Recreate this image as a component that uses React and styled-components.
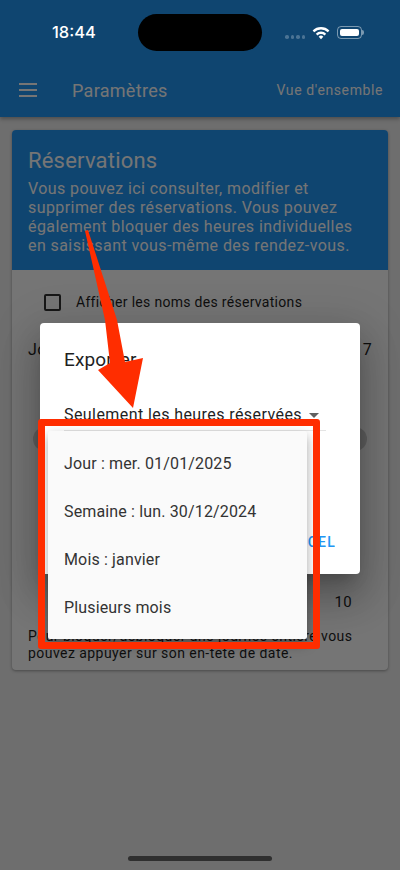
import React from "react";
import styled, { createGlobalStyle } from "styled-components";

const menuItems = ["Jour : mer. 01/01/2025", "Semaine : lun. 30/12/2024", "Mois : janvier", "Plusieurs mois"];

function App() {
  return (
    <>
      <GlobalStyle />
      <Page>
        <Header>
          <Toolbar>
            <MenuIcon>
              <span />
              <span />
              <span />
            </MenuIcon>
            <PageTitle>Paramètres</PageTitle>
            <OverviewLink>Vue d'ensemble</OverviewLink>
          </Toolbar>
        </Header>

        <Content>
          <Card>
            <CardHeader>
              <CardTitle>Réservations</CardTitle>
              <CardText>
                Vous pouvez ici consulter, modifier et supprimer des réservations. Vous pouvez également bloquer des
                heures individuelles en saisissant vous-même des rendez-vous.
              </CardText>
            </CardHeader>
            <CardBody>
              <CheckRow>
                <CheckBox />
                <span>Afficher les noms des réservations</span>
              </CheckRow>
              <ValueRow>
                <span>Jours</span>
                <span>7</span>
              </ValueRow>
              <SliderPill />
              <CountRow>10</CountRow>
              <HintText>
                Pour bloquer/débloquer une journée entière vous pouvez appuyer sur son en-tête de date.
              </HintText>
            </CardBody>
          </Card>
        </Content>

        <Scrim />

        <Dialog>
          <DialogTitle>Exporter</DialogTitle>
          <SelectRow>
            <span>Seulement les heures réservées</span>
            <SelectArrow />
          </SelectRow>
          <DialogActions>
            <ExcelButton>EXCEL</ExcelButton>
          </DialogActions>
        </Dialog>

        <DropdownMenu>
          {menuItems.map((item) => (
            <MenuItem key={item}>{item}</MenuItem>
          ))}
        </DropdownMenu>

        <RedFrame />
        <Arrow viewBox="0 0 400 870">
          <path d="M85 231 L88 230 L117 320 L125 362 L143 358 L133 408 L98 370 L110 363 L105 320 Z" fill="#ff2d00" />
        </Arrow>

        <StatusBar>
          <Clock>18:44</Clock>
          <Island />
          <StatusIcons>
            <SignalDots>
              <i />
              <i />
              <i />
              <i />
            </SignalDots>
            <svg width="18" height="14" viewBox="0 0 18 14">
              <path d="M.6 4.4a12 12 0 0 1 16.8 0l-1.6 1.8a9.6 9.6 0 0 0-13.6 0Z" fill="#fff" />
              <path d="M3.8 7.7a7.4 7.4 0 0 1 10.4 0l-1.7 1.8a4.9 4.9 0 0 0-7 0Z" fill="#fff" />
              <path d="M6.7 10.7a3.2 3.2 0 0 1 4.6 0L9 13.2Z" fill="#fff" />
            </svg>
            <Battery>
              <BatteryLevel />
            </Battery>
          </StatusIcons>
        </StatusBar>

        <HomeBar />
      </Page>
    </>
  );
}

export default App;

const GlobalStyle = createGlobalStyle`
  html, body {
    margin: 0;
    padding: 0;
    background: #efefef;
  }
  * {
    box-sizing: border-box;
  }
`;

const Page = styled.div`
  position: relative;
  width: 400px;
  height: 870px;
  overflow: hidden;
  background: #efefef;
  font-family: Roboto, "Liberation Sans", sans-serif;
  color: #1f1f1f;
`;

const Header = styled.header`
  height: 117px;
  padding-top: 60px;
  background: #2196f3;
  box-shadow: 0 2px 4px rgba(0, 0, 0, 0.3);
`;

const Toolbar = styled.div`
  display: flex;
  align-items: center;
  height: 60px;
  padding: 0 17px 0 19px;
  color: #fff;
`;

const MenuIcon = styled.div`
  display: flex;
  flex-direction: column;
  justify-content: space-between;
  width: 18px;
  height: 14px;
  margin-right: 35px;

  span {
    display: block;
    height: 2px;
    background: #fff;
  }
`;

const PageTitle = styled.div`
  flex: 1;
  font-size: 18px;
  font-weight: 400;
  letter-spacing: 0.3px;
`;

const OverviewLink = styled.div`
  font-size: 14px;
  font-weight: 400;
  letter-spacing: 0.6px;
`;

const Content = styled.main`
  padding: 13px 12px;
`;

const Card = styled.section`
  height: 540px;
  border-radius: 4px;
  overflow: hidden;
  background: #fff;
  box-shadow: 0 1px 3px rgba(0, 0, 0, 0.35);
`;

const CardHeader = styled.div`
  height: 140px;
  padding: 16px 16px 0;
  background: #2196f3;
  color: #fff;
`;

const CardTitle = styled.h2`
  margin: 0 0 4px;
  font-size: 22px;
  line-height: 29px;
  font-weight: 400;
  letter-spacing: 0.2px;
`;

const CardText = styled.p`
  margin: 0;
  font-size: 16px;
  line-height: 19px;
  letter-spacing: 0.42px;
`;

const CardBody = styled.div`
  padding: 23px 16px 0;
  font-size: 14px;
  letter-spacing: 0.3px;
`;

const CheckRow = styled.label`
  display: flex;
  align-items: center;
  gap: 15px;
  padding-left: 16px;
  height: 18px;
`;

const CheckBox = styled.span`
  width: 17px;
  height: 17px;
  border: 2px solid #333;
  border-radius: 2px;
`;

const ValueRow = styled.div`
  display: flex;
  justify-content: space-between;
  margin-top: 29px;
  font-size: 16px;
  line-height: 20px;
`;

const SliderPill = styled.div`
  height: 24px;
  margin: 67px 5px 0;
  border-radius: 12px;
  background: #d2d2d2;
`;

const CountRow = styled.div`
  margin-top: 141px;
  padding-right: 20px;
  text-align: right;
  font-size: 15px;
  line-height: 20px;
`;

const HintText = styled.p`
  margin: 16px 0 0;
  font-size: 14px;
  line-height: 17px;
  letter-spacing: 0.45px;
`;

const Scrim = styled.div`
  position: absolute;
  inset: 0;
  background: rgba(0, 0, 0, 0.54);
`;

const Dialog = styled.div`
  position: absolute;
  top: 323px;
  left: 40px;
  width: 320px;
  height: 251px;
  padding: 23px 24px 0;
  border-radius: 4px;
  background: #fff;
  box-shadow: 0 11px 15px -7px rgba(0, 0, 0, 0.2), 0 24px 38px 3px rgba(0, 0, 0, 0.2),
    0 9px 46px 8px rgba(0, 0, 0, 0.12);
`;

const DialogTitle = styled.h3`
  margin: 0;
  font-size: 19px;
  line-height: 28px;
  font-weight: 400;
  letter-spacing: 0.15px;
`;

const SelectRow = styled.div`
  display: flex;
  align-items: center;
  justify-content: space-between;
  width: 262px;
  margin-top: 31px;
  padding: 0 7px 5px 0;
  border-bottom: 1px solid #e4e4e4;
  font-size: 16px;
  line-height: 20px;
  letter-spacing: 0.42px;
`;

const SelectArrow = styled.span`
  width: 0;
  height: 0;
  border-left: 5px solid transparent;
  border-right: 5px solid transparent;
  border-top: 5px solid #616161;
`;

const DialogActions = styled.div`
  display: flex;
  justify-content: flex-end;
  margin-top: 103px;
`;

const ExcelButton = styled.button`
  border: 0;
  padding: 0;
  background: none;
  color: #2196f3;
  font-family: inherit;
  font-size: 14px;
  font-weight: 500;
  letter-spacing: 1.25px;
`;

const DropdownMenu = styled.ul`
  position: absolute;
  top: 431px;
  left: 48px;
  width: 259px;
  margin: 0;
  padding: 8px 0;
  list-style: none;
  border-radius: 2px;
  background: #fafafa;
  box-shadow: 0 5px 12px rgba(0, 0, 0, 0.35);
`;

const MenuItem = styled.li`
  display: flex;
  align-items: center;
  height: 48px;
  padding: 0 16px;
  font-size: 16px;
  letter-spacing: 0.15px;
  color: #333;
`;

const RedFrame = styled.div`
  position: absolute;
  top: 419px;
  left: 38px;
  width: 282px;
  height: 230px;
  border: 7.5px solid #ff2d00;
  border-radius: 3px;
`;

const Arrow = styled.svg`
  position: absolute;
  inset: 0;
  width: 400px;
  height: 870px;
`;

const StatusBar = styled.div`
  position: absolute;
  top: 14px;
  left: 0;
  right: 0;
  display: flex;
  align-items: center;
  height: 37px;
  padding: 0 36px 0 52px;
  color: #fff;
`;

const Clock = styled.div`
  width: 86px;
  margin-top: -2px;
  font-family: Inter, Roboto, sans-serif;
  font-size: 16.5px;
  font-weight: 500;
`;

const Island = styled.div`
  width: 124px;
  height: 37px;
  border-radius: 19px;
  background: #000;
`;

const StatusIcons = styled.div`
  display: flex;
  align-items: center;
  margin-left: auto;
  gap: 7px;
  margin-right: 2px;
`;

const SignalDots = styled.div`
  display: flex;
  gap: 2px;
  margin-top: 9px;

  i {
    width: 3.5px;
    height: 3.5px;
    border-radius: 50%;
    background: rgba(255, 255, 255, 0.25);
  }
`;

const Battery = styled.div`
  position: relative;
  width: 25px;
  height: 13px;
  padding: 2px;
  border: 1px solid rgba(255, 255, 255, 0.45);
  border-radius: 4px;

  &::after {
    content: "";
    position: absolute;
    top: 3px;
    right: -3px;
    width: 2px;
    height: 5px;
    border-radius: 0 2px 2px 0;
    background: rgba(255, 255, 255, 0.45);
  }
`;

const BatteryLevel = styled.div`
  height: 100%;
  border-radius: 2px;
  background: #fff;
`;

const HomeBar = styled.div`
  position: absolute;
  bottom: 9px;
  left: 128px;
  width: 144px;
  height: 5px;
  border-radius: 3px;
  background: #2f2f2f;
`;
